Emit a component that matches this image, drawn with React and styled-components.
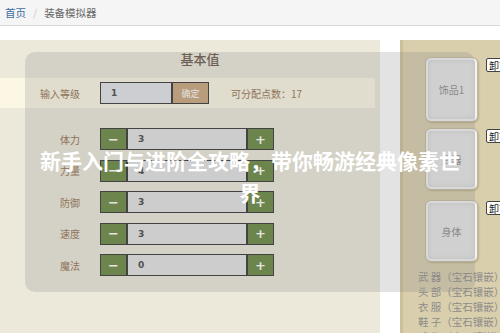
import React from "react";
import styled, { createGlobalStyle } from "styled-components";

const Global = createGlobalStyle`
  html, body {
    margin: 0;
    padding: 0;
    background: #ffffff;
    font-family: "Noto Sans CJK SC", "Liberation Sans", sans-serif;
  }
`;

const Page = styled.div`
  position: relative;
  width: 500px;
  height: 333px;
  overflow: hidden;
  background: #ffffff;
`;

const Crumbs = styled.div`
  height: 26px;
  box-sizing: border-box;
  display: flex;
  align-items: center;
  padding-left: 5px;
  background: #f5f5f5;
  border-bottom: 1px solid #d9d9d9;
  font-size: 10.5px;
`;

const CrumbLink = styled.span`
  color: #3d6fa3;
`;

const CrumbSep = styled.span`
  color: #cccccc;
  margin: 0 7px;
`;

const CrumbCurrent = styled.span`
  color: #666666;
`;

const Main = styled.div`
  margin-top: 14px;
  display: flex;
  height: 293px;
`;

const LeftCol = styled.div`
  width: 380px;
  background: #ece8da;
`;

const Gap = styled.div`
  width: 20px;
  background: #ffffff;
`;

const RightCol = styled.div`
  width: 100px;
  box-sizing: border-box;
  padding: 17px 0 0 22px;
  background: #d9cfad;
  border-left: 3px solid #cdbf98;
`;

const Heading = styled.div`
  height: 38px;
  line-height: 38px;
  padding-left: 20px;
  text-align: center;
  font-size: 13px;
  font-weight: 500;
  color: #675747;
`;

const LevelRow = styled.div`
  width: 375px;
  height: 30px;
  display: flex;
  align-items: center;
  background: #fcf7e4;
  margin-bottom: 20px;
`;

const Label = styled.div`
  width: 60px;
  padding-left: 40px;
  box-sizing: content-box;
  font-size: 10px;
  color: #94704f;
  text-align: ${(p) => (p.$left ? "left" : "center")};
  flex-shrink: 0;
`;

const Field = styled.div`
  width: ${(p) => p.$w}px;
  height: 22px;
  box-sizing: border-box;
  display: flex;
  align-items: center;
  padding-left: 10px;
  background: ${(p) => p.$bg || "#e3e3e3"};
  border: 1px solid #333333;
  font-family: "DejaVu Sans", sans-serif;
  font-size: 9px;
  font-weight: bold;
  color: #444444;
`;

const OkButton = styled.div`
  width: 37px;
  height: 22px;
  box-sizing: border-box;
  display: flex;
  align-items: center;
  justify-content: center;
  background: #c9a47c;
  border: 1px solid #333333;
  color: #ffffff;
  font-size: 9px;
`;

const Points = styled.div`
  margin-left: 22px;
  font-size: 10px;
  color: #94704f;
`;

const StatRow = styled.div`
  display: flex;
  align-items: center;
  height: 22px;
  margin-bottom: 9.5px;
`;

const Step = styled.div`
  width: 27px;
  height: 22px;
  box-sizing: border-box;
  display: flex;
  align-items: center;
  justify-content: center;
  background: #66873f;
  border: 1px solid #333333;
  color: #ffffff;
  font-family: "DejaVu Sans", sans-serif;
  font-weight: bold;
  font-size: 13px;
`;

const SlotRow = styled.div`
  display: flex;
  align-items: flex-start;
  margin-bottom: ${(p) => p.$mb}px;
`;

const Slot = styled.div`
  width: 53px;
  height: ${(p) => p.$h}px;
  box-sizing: border-box;
  display: flex;
  align-items: center;
  justify-content: center;
  background: #e7e7e7;
  border: 1px solid #c4bb9f;
  border-radius: 6px;
  box-shadow: inset 0 0 0 2px #f3f3f3, inset 0 0 4px 3px #d6d6d6, 1px 1px 2px #b9ad88;
  font-size: 10px;
  color: #8c8c8c;
  flex-shrink: 0;
`;

const Unload = styled.div`
  margin: 1px 0 0 8px;
  padding: 0 2px;
  height: 14px;
  line-height: 13px;
  box-sizing: border-box;
  background: #ffffff;
  border: 1px solid #444444;
  border-radius: 2px;
  font-size: 10px;
  color: #222222;
  white-space: nowrap;
  flex-shrink: 0;
`;

const GemList = styled.div`
  margin: 7px 0 0 -7px;
  font-size: 10.5px;
  line-height: 15px;
  color: #8c8c8a;
  white-space: nowrap;
`;

const Shade = styled.div`
  position: absolute;
  left: 25px;
  top: 52px;
  width: 450px;
  height: 240px;
  box-sizing: border-box;
  padding: 8px 10px 0;
  display: flex;
  align-items: center;
  justify-content: center;
  border-radius: 10px;
  background: rgba(128, 128, 128, 0.22);
`;

const CoverTitle = styled.div`
  width: 430px;
  text-align: center;
  font-size: 21px;
  line-height: 32px;
  font-weight: bold;
  color: #ffffff;
`;

const stats = [
  ["体力", 3],
  ["力量", 4],
  ["防御", 3],
  ["速度", 3],
  ["魔法", 0],
];

const slots = [
  ["饰品1", 65, 6],
  ["武器", 62, 10],
  ["身体", 62, 0],
];

const gems = ["武 器（宝石镶嵌）", "头 部（宝石镶嵌）", "衣 服（宝石镶嵌）", "鞋 子（宝石镶嵌）", "戒 指（宝石镶嵌）"];

export default function App() {
  return (
    <Page>
      <Global />
      <Crumbs>
        <CrumbLink>首页</CrumbLink>
        <CrumbSep>/</CrumbSep>
        <CrumbCurrent>装备模拟器</CrumbCurrent>
      </Crumbs>
      <Main>
        <LeftCol>
          <Heading>基本值</Heading>
          <LevelRow>
            <Label $left>输入等级</Label>
            <Field $w={72} $bg="#e2e5e9">1</Field>
            <OkButton>确定</OkButton>
            <Points>可分配点数：17</Points>
          </LevelRow>
          {stats.map(([name, val]) => (
            <StatRow key={name}>
              <Label>{name}</Label>
              <Step>−</Step>
              <Field $w={120}>{val}</Field>
              <Step>+</Step>
            </StatRow>
          ))}
        </LeftCol>
        <Gap />
        <RightCol>
          {slots.map(([name, h, mb]) => (
            <SlotRow key={name} $mb={mb}>
              <Slot $h={h}>{name}</Slot>
              <Unload>卸下</Unload>
            </SlotRow>
          ))}
          <GemList>
            {gems.map((g) => (
              <div key={g}>{g}</div>
            ))}
          </GemList>
        </RightCol>
      </Main>
      <Shade>
        <CoverTitle>新手入门与进阶全攻略，带你畅游经典像素世界</CoverTitle>
      </Shade>
    </Page>
  );
}
